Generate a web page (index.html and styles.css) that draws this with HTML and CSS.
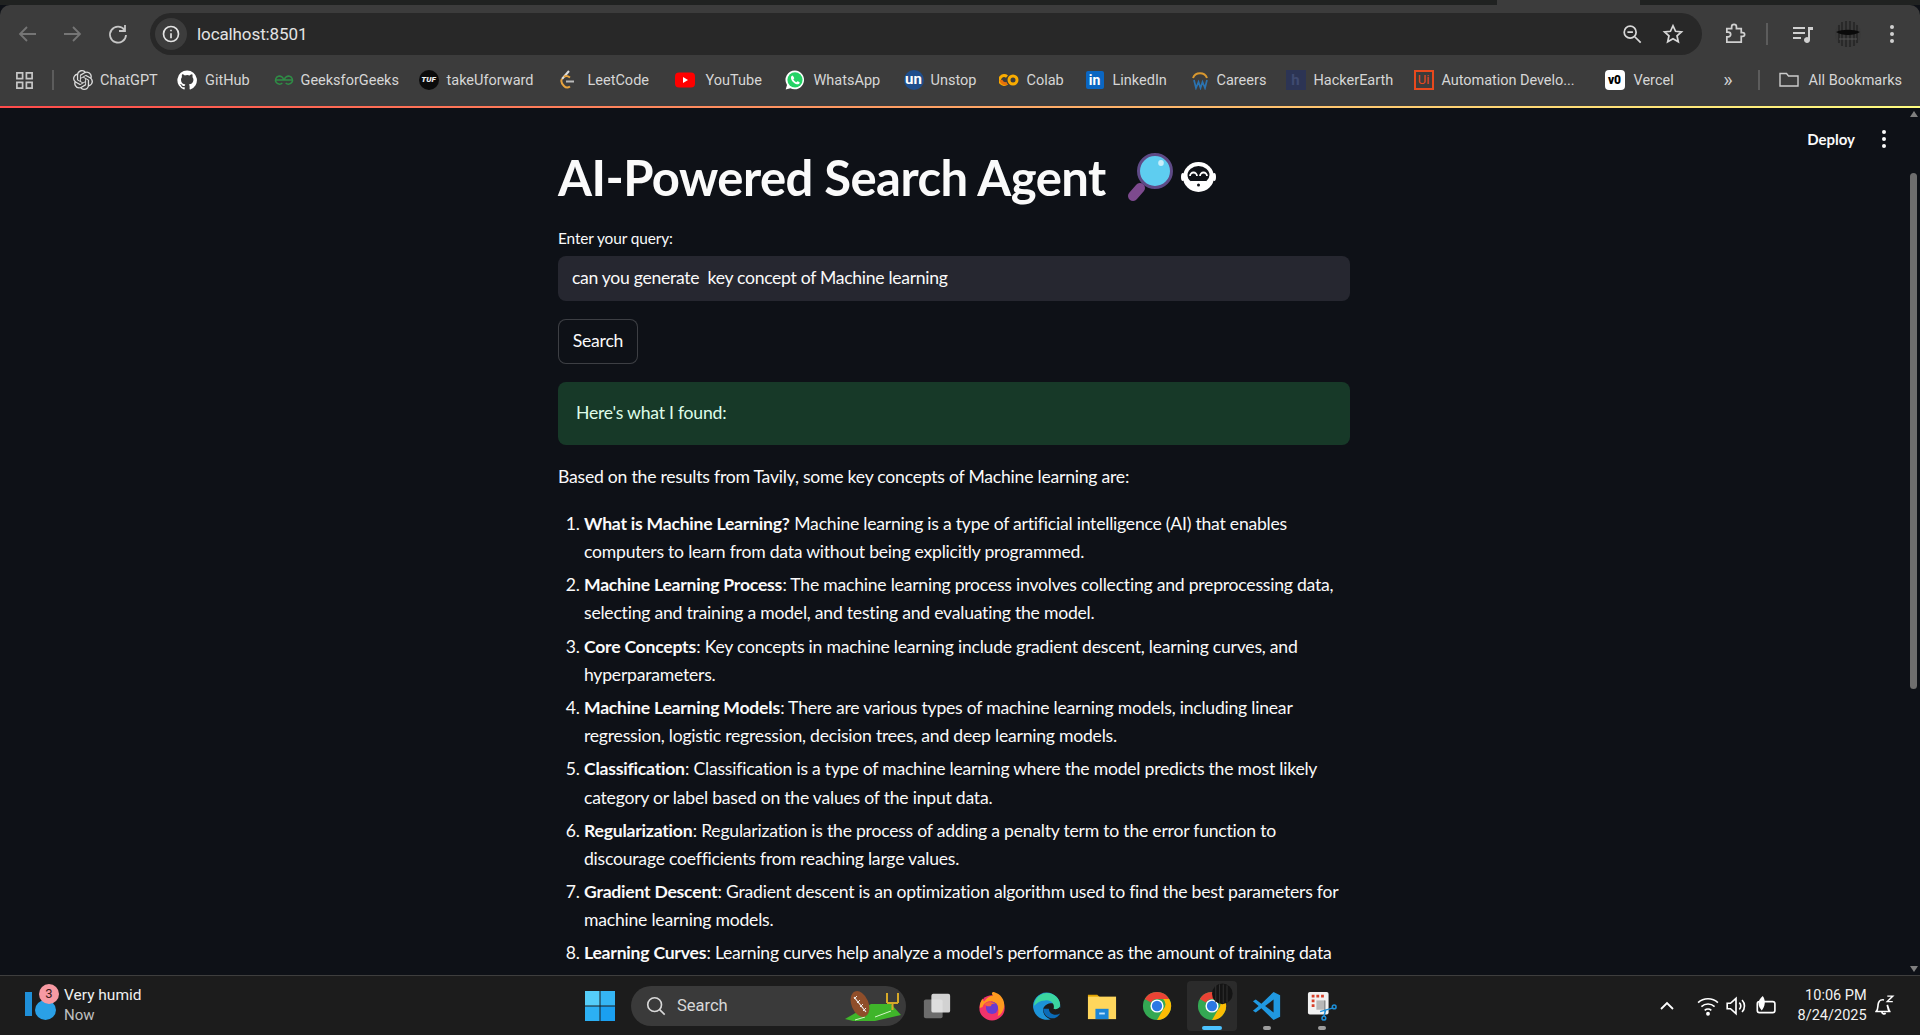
FILE: index.html
```html
<!DOCTYPE html>
<html lang="en">
<head>
<meta charset="utf-8">
<title>AI-Powered Search Agent</title>
<link rel="stylesheet" href="styles.css">
</head>
<body>
<div class="screen">
  <div class="tabstrip"><span class="tab-notch"></span></div>
  <header class="toolbar">
    <svg class="nav dim" viewBox="0 0 24 24"><path d="M20 12H5M11 5l-7 7 7 7"/></svg>
    <svg class="nav dim" viewBox="0 0 24 24"><path d="M4 12h15M13 5l7 7-7 7"/></svg>
    <svg class="nav reload" viewBox="0 0 24 24"><path d="M18.5 8A8 8 0 1 0 20 13M19 3v6h-6"/></svg>
    <div class="omnibox">
      <span class="info"><svg viewBox="0 0 24 24"><circle cx="12" cy="12" r="9"/><path d="M12 11v6M12 7v1.6"/></svg></span>
      <span class="url">localhost:8501</span>
      <span class="spacer"></span>
      <svg class="omni-icon" viewBox="0 0 24 24"><circle cx="10" cy="10" r="6.500"/><path d="M15 15l6.500 6.500M7 10h6"/></svg>
      <svg class="omni-icon" viewBox="0 0 24 24"><path d="M12 3l2.800 6 6.400.7-4.800 4.300 1.400 6.400L12 17.100l-5.800 3.300 1.400-6.400-4.800-4.300L9.200 9z"/></svg>
    </div>
    <svg class="tool ext" viewBox="0 0 24 24"><path d="M4 7h5V5a2.500 2.500 0 0 1 5 0v2h5v4h1.500a2 2 0 0 1 0 4H19v6H4v-5.500h1.500a2.500 2.500 0 0 0 0-5H4z" transform="scale(.96)"/></svg>
    <span class="vbar"></span>
    <svg class="tool media" viewBox="0 0 24 24"><path d="M2 6h12M2 11h12M2 16h8"/><path class="fill" d="M17 5h5v3h-3v10a3 3 0 1 1-2-2.800z"/></svg>
    <svg class="avatar" viewBox="0 0 26 26"><circle cx="13" cy="13" r="13" fill="#3a3a3a"/><path d="M7 1v24M11 0v26M15 0v26M19 1v24M4 4v18M22 4v18" stroke="#1f1f1f" stroke-width="1.200"/><path d="M1 11c6-3 18-3 24 0-6 4-18 4-24 0z" fill="#0a0a0a"/><path d="M4 18h18" stroke="#555" stroke-width="1"/></svg>
    <span class="kebab"><i></i><i></i><i></i></span>
  </header>
  <nav class="bookmarks">
    <svg class="apps" viewBox="0 0 20 20"><path d="M2 2h6v6H2zM12 2h6v6h-6zM2 12h6v6H2zM12 12h6v6h-6z"/></svg>
    <span class="vbar short"></span>
    <a class="bm w-chatgpt"><svg viewBox="0 0 24 24"><path fill="#dcdcdc" d="M22.282 9.821a5.985 5.985 0 0 0-.516-4.910 6.046 6.046 0 0 0-6.510-2.900A6.065 6.065 0 0 0 4.981 4.180a5.985 5.985 0 0 0-3.998 2.900 6.046 6.046 0 0 0 .743 7.097 5.980 5.980 0 0 0 .510 4.911 6.051 6.051 0 0 0 6.515 2.900A5.985 5.985 0 0 0 13.260 24a6.056 6.056 0 0 0 5.772-4.206 5.990 5.990 0 0 0 3.997-2.900 6.056 6.056 0 0 0-.747-7.073zM13.260 22.430a4.476 4.476 0 0 1-2.876-1.040l.141-.081 4.779-2.758a.795.795 0 0 0 .392-.681v-6.737l2.020 1.168a.071.071 0 0 1 .038.052v5.583a4.504 4.504 0 0 1-4.494 4.494zM3.600 18.304a4.470 4.470 0 0 1-.535-3.014l.142.085 4.783 2.759a.771.771 0 0 0 .780 0l5.843-3.369v2.332a.080.080 0 0 1-.033.062L9.740 19.950a4.500 4.500 0 0 1-6.140-1.646zM2.340 7.896a4.485 4.485 0 0 1 2.366-1.973V11.600a.766.766 0 0 0 .388.676l5.815 3.355-2.020 1.168a.076.076 0 0 1-.071 0l-4.830-2.786A4.504 4.504 0 0 1 2.340 7.872zm16.597 3.855l-5.833-3.387L15.119 7.200a.076.076 0 0 1 .071 0l4.830 2.791a4.494 4.494 0 0 1-.676 8.105v-5.678a.790.790 0 0 0-.407-.667zm2.010-3.023l-.141-.085-4.774-2.782a.776.776 0 0 0-.785 0L9.409 9.230V6.897a.066.066 0 0 1 .028-.061l4.830-2.787a4.500 4.500 0 0 1 6.680 4.660zm-12.640 4.135l-2.020-1.164a.080.080 0 0 1-.038-.057V6.075a4.500 4.500 0 0 1 7.375-3.453l-.142.080L8.704 5.460a.795.795 0 0 0-.393.681zm1.097-2.365l2.602-1.500 2.607 1.500v2.999l-2.597 1.500-2.607-1.500z"/></svg>ChatGPT</a>
    <a class="bm w-github"><svg viewBox="0 0 20 20"><path fill="#fff" d="M10 .5a9.700 9.700 0 0 0-3 18.900c.5.100.7-.2.700-.5v-1.700c-2.700.6-3.300-1.300-3.300-1.300-.4-1.100-1.100-1.400-1.100-1.400-.9-.6.100-.6.100-.6 1 .1 1.500 1 1.500 1 .9 1.500 2.300 1.100 2.900.8.100-.6.300-1.100.6-1.300-2.200-.2-4.400-1.100-4.400-4.800 0-1.100.4-1.900 1-2.600-.1-.2-.4-1.200.1-2.600 0 0 .8-.3 2.700 1a9.400 9.400 0 0 1 4.800 0c1.900-1.300 2.700-1 2.700-1 .5 1.400.2 2.400.1 2.600.6.700 1 1.500 1 2.600 0 3.700-2.300 4.600-4.500 4.800.4.300.7.900.7 1.800v2.700c0 .3.200.6.700.5A9.700 9.700 0 0 0 10 .5z"/></svg>GitHub</a>
    <a class="bm w-gfg"><svg viewBox="0 0 20 20"><g fill="none" stroke="#2f8d46" stroke-width="1.500"><path d="M1 10h18M9.500 10a4 4 0 1 0-1.200 3M10.500 10a4 4 0 1 1 1.200 3"/></g></svg>GeeksforGeeks</a>
    <a class="bm w-tuf"><span class="tuf">TUF</span>takeUforward</a>
    <a class="bm w-leet"><svg viewBox="0 0 20 20"><g fill="none" stroke-width="2"><path stroke="#ddd" d="M12 1L5 9"/><path stroke="#e7a33e" d="M5 9c-2 3 0 5 2 7s4 2 6 .5"/><path stroke="#e7a33e" d="M7 7c2-2 4-1 6 .5"/><path stroke="#bbb" d="M9 11.500h8"/></g></svg>LeetCode</a>
    <a class="bm w-yt"><svg viewBox="0 0 20 20"><rect y="2.500" width="20" height="15" rx="4" fill="#f00"/><path d="M8 7l5 3-5 3z" fill="#fff"/></svg>YouTube</a>
    <a class="bm w-wa"><svg viewBox="0 0 20 20"><path fill="#fff" d="M10 .5a9.400 9.400 0 0 0-8 14.400L.7 19.500l4.700-1.200A9.400 9.400 0 1 0 10 .5z"/><circle cx="10" cy="9.800" r="7.600" fill="#25d366"/><path fill="#fff" d="M7.300 5.500c-.9.400-1.500 1.500-1.300 2.800.4 2.700 3.200 5.500 5.900 5.900 1.300.2 2.400-.4 2.800-1.300.2-.5-2-1.800-2.500-1.500l-.9.900c-1-.3-2.700-2-3-3l.9-.9c.3-.5-1.400-3.100-1.900-2.900z"/></svg>WhatsApp</a>
    <a class="bm w-un"><span class="un">un</span>Unstop</a>
    <a class="bm w-colab"><svg viewBox="0 0 20 20"><g fill="none" stroke-width="3"><path stroke="#f9ab00" d="M8 6.700a4.400 4.400 0 1 0 0 6.600"/><circle stroke="#f9ab00" cx="14" cy="10" r="4"/><path stroke="#e8710a" d="M2 10a4.400 4.400 0 0 0 6 3.300"/></g></svg>Colab</a>
    <a class="bm w-li"><span class="li">in</span>LinkedIn</a>
    <a class="bm w-car"><svg viewBox="0 0 20 20"><path d="M3 8a7.500 7.500 0 0 1 14 0" fill="none" stroke="#d9982f" stroke-width="2"/><path d="M4 10l2 8 2.500-6 2 6 2-6 2.500 6 2-8" fill="none" stroke="#2b73b0" stroke-width="1.700"/></svg>Careers</a>
    <a class="bm w-he"><span class="he">h</span>HackerEarth</a>
    <a class="bm w-ui"><span class="ui">Ui</span><span class="clip">Automation Develo...</span></a>
    <a class="bm w-vercel"><span class="vz">v0</span>Vercel</a>
    <span class="spacer"></span>
    <span class="chev">»</span>
    <span class="vbar short"></span>
    <a class="bm all"><svg viewBox="0 0 20 20"><path d="M1 5.500V16h18V6H9.500L7.500 3.500H1z" fill="none" stroke="#ccc" stroke-width="1.400"/></svg>All Bookmarks</a>
  </nav>
  <div class="decoration"></div>
  <main class="app">
    <div class="app-head">
      <span>Deploy</span>
      <span class="kebab small"><i></i><i></i><i></i></span>
    </div>
    <div class="column">
      <h1>AI-Powered Search Agent
        <svg class="glass" viewBox="0 0 48 49"><path d="M14 35L7 43" stroke="#7d4a8e" stroke-width="10" stroke-linecap="round"/><circle cx="29" cy="18" r="16.500" fill="#5ecdf0" stroke="#5e4a86" stroke-width="3"/><ellipse cx="35" cy="10" rx="2.800" ry="3" fill="#c8eefa"/></svg>
        <svg class="face" viewBox="0 0 35 30"><ellipse cx="17.500" cy="15" rx="15.500" ry="15" fill="#fff"/><ellipse cx="1.800" cy="15" rx="1.800" ry="4" fill="#fff"/><ellipse cx="33.200" cy="15" rx="1.800" ry="4" fill="#fff"/><ellipse cx="17.500" cy="13" rx="11" ry="9" fill="#0e1117"/><path d="M9 14a3.500 3.500 0 0 1 7 0M19 14a3.500 3.500 0 0 1 7 0" fill="none" stroke="#fff" stroke-width="1.800"/><path d="M9 19h17c-2 3-5 4-8.500 4S11 22 9 19z" fill="#fff"/><circle cx="17.500" cy="23" r="1.500" fill="#0e1117"/></svg>
      </h1>
      <label class="field-label">Enter your query:</label>
      <div class="input">can you generate&nbsp; key concept of Machine learning</div>
      <button class="btn">Search</button>
      <div class="alert">Here's what I found:</div>
      <p class="lead">Based on the results from Tavily, some key concepts of Machine learning are:</p>
      <ol class="answers">
        <li><b>What is Machine Learning?</b> Machine learning is a type of artificial intelligence (AI) that enables computers to learn from data without being explicitly programmed.</li>
        <li><b>Machine Learning Process</b>: The machine learning process involves collecting and preprocessing data, selecting and training a model, and testing and evaluating the model.</li>
        <li><b>Core Concepts</b>: Key concepts in machine learning include gradient descent, learning curves, and hyperparameters.</li>
        <li><b>Machine Learning Models</b>: There are various types of machine learning models, including linear regression, logistic regression, decision trees, and deep learning models.</li>
        <li><b>Classification</b>: Classification is a type of machine learning where the model predicts the most likely category or label based on the values of the input data.</li>
        <li><b>Regularization</b>: Regularization is the process of adding a penalty term to the error function to discourage coefficients from reaching large values.</li>
        <li><b>Gradient Descent</b>: Gradient descent is an optimization algorithm used to find the best parameters for machine learning models.</li>
        <li><b>Learning Curves</b>: Learning curves help analyze a model's performance as the amount of training data changes.</li>
      </ol>
    </div>
    <div class="scroll"><span class="arrow up"></span><span class="thumb"></span><span class="spacer"></span><span class="arrow down"></span></div>
  </main>
  <footer class="taskbar">
    <div class="weather">
      <span class="wicon"><span class="wbar"></span><span class="drop"></span><span class="badge">3</span></span>
      <span class="wtext"><b>Very humid</b><small>Now</small></span>
    </div>
    <div class="dock">
      <svg class="win" viewBox="0 0 32 32"><path fill="#55cdf8" d="M1 1h14.500v14.500H1z"/><path fill="#35b5f4" d="M16.500 1H31v14.500H16.500z"/><path fill="#2cb0f3" d="M1 16.500h14.500V31H1z"/><path fill="#1a9ff0" d="M16.500 16.500H31V31H16.500z"/></svg>
      <div class="tsearch">
        <svg viewBox="0 0 24 24"><circle cx="10.500" cy="10.500" r="7.500"/><path d="M16 16l5.500 5.500"/></svg>
        <span>Search</span>
        <svg class="ball" viewBox="0 0 56 30"><path d="M0 28L26 13h20l10 11-26 6H8z" fill="#3fb52a"/><path d="M30 26l16-6M10 29l10-3" stroke="#d6f5c8" stroke-width="1"/><ellipse cx="15" cy="13" rx="8.500" ry="13.500" transform="rotate(-22 15 13)" fill="#8f4e2a"/><path d="M9 6l12 15" stroke="#eee" stroke-width="1.200"/><path d="M12 5l-3 3M15 9l-3 3M18 13l-3 3M21 17l-3 3" stroke="#eee" stroke-width="1"/><path d="M42 2v10M53 2v10M42 12h11M47.500 12v7" stroke="#d7a928" stroke-width="2" fill="none"/></svg>
      </div>
      <svg class="dock-icon" viewBox="0 0 32 32"><rect x="2" y="9" width="20" height="20" rx="2" fill="#6c6c6c"/><rect x="10" y="3" width="20" height="20" rx="2" fill="#f2f2f2" fill-opacity=".85"/></svg>
      <svg class="dock-icon" viewBox="0 0 32 32"><circle cx="16" cy="18" r="13.500" fill="#f2336b"/><path d="M3 18c0-5 2-9 3-10 0 2 1 3 2 3 2-4 6-6 9-6-2-3-1-4 1-4 7 2 12 8 11 16-1 4-3 8-7 10 2-5 1-14-6-16-5-1-9 2-10 6z" fill="#ff9a1f"/><circle cx="16" cy="18" r="6.500" fill="#6a3bd0"/><path d="M8 14c3-3 9-3 12 0-3-1-5 0-5 2-4 1-6-1-7-2z" fill="#f7653a"/></svg>
      <svg class="dock-icon" viewBox="0 0 32 32"><path d="M30 18A14.500 14.500 0 1 0 20 30c-5-1-9-6-8-11 1-4 5-6 9-6s8 2 9 5z" fill="#1d93d8"/><path d="M2 16C3 6 10 2 16 2c8 0 14 6 14 13 0 4-4 5-7 4 2-5-3-10-9-9-6 0-10 4-12 6z" fill="#3bd6a0"/><path d="M12 19c0 6 5 11 12 10 3-1 5-3 6-5-5 3-12 1-12-5z" fill="#0b6bb8"/></svg>
      <svg class="dock-icon" viewBox="0 0 32 32"><path d="M1 4h10l3 3H1z" fill="#e2a400"/><rect x="1" y="6" width="30" height="24" fill="#ffd65c"/><rect x="9" y="19" width="14" height="11" fill="#1a86d8"/><rect x="13" y="23" width="6" height="2" fill="#bfe3ff"/></svg>
      <svg class="dock-icon" viewBox="0 0 32 32"><use href="#chrome-mark"/></svg>
      <div class="running">
        <svg class="dock-icon over" viewBox="0 0 32 32"><defs><g id="chrome-mark"><circle cx="16" cy="16" r="15" fill="#34a853"/><path d="M16 1a15 15 0 0 1 13 7.500H16a7.500 7.500 0 0 0-6.500 3.700L3 8.500A15 15 0 0 1 16 1z" fill="#ea4335"/><path d="M29 8.500A15 15 0 0 1 16 31l6.500-11.200a7.500 7.500 0 0 0 0-11.300z" fill="#fbbc04"/><circle cx="16" cy="16" r="7" fill="#fff"/><circle cx="16" cy="16" r="5.500" fill="#2b78e4"/></g></defs><use href="#chrome-mark"/><circle cx="27" cy="3" r="11" fill="#141414"/><path d="M20 -6v18M24 -7v20M28 -7v20M32 -6v18" stroke="#333" stroke-width="1"/></svg>
        <span class="active-pill"></span>
      </div>
      <div class="pinned">
        <svg class="dock-icon" viewBox="0 0 32 32"><path d="M23 1l7 3.500v23L23 31 10 18.500 4 23l-3-2 6-5-6-5 3-2 6 4.500z" fill="#2098e0"/><path d="M23 9v14l-9-7z" fill="#1d1d1d"/></svg>
        <span class="dot"></span>
      </div>
      <div class="pinned">
        <svg class="dock-icon" viewBox="0 0 32 32"><rect x="1" y="1" width="22" height="24" rx="2" fill="#f2f2f2"/><path d="M5 4h3v3H5zM10 4h3v3h-3zM15 4h3v3h-3zM5 9h3v3H5zM5 14h3v3H5z" fill="#d8402a"/><path d="M10 10h9v10h-9z" fill="#b8b8b8"/><path d="M19 10v12" stroke="#888" stroke-width="1.500"/><path d="M14 22l14-4M20 20l-2 7" stroke="#1d8fd8" stroke-width="1.600" fill="none"/><circle cx="18" cy="29" r="2" fill="none" stroke="#1d8fd8" stroke-width="1.600"/><circle cx="29" cy="17" r="2" fill="none" stroke="#1d8fd8" stroke-width="1.600"/></svg>
        <span class="dot"></span>
      </div>
    </div>
    <div class="tray">
      <svg class="caret" viewBox="0 0 16 16"><path d="M2 11l6-6 6 6"/></svg>
      <svg class="tray-icon wifi" viewBox="0 0 20 20"><path d="M1 7a13 13 0 0 1 18 0M4 10.500a9 9 0 0 1 12 0M7 14a4.500 4.500 0 0 1 6 0"/><circle cx="10" cy="17" r="1" fill="#fff"/></svg>
      <svg class="tray-icon vol" viewBox="0 0 20 20"><path d="M2 7.500h3L10 3v14l-5-4.500H2zM13 7a4 4 0 0 1 0 6M15.500 4.500a8 8 0 0 1 0 11"/></svg>
      <svg class="tray-icon" viewBox="0 0 20 20"><rect x="3" y="6" width="16" height="10" rx="2"/><path class="fill" d="M8 1C3 5 3 10 7 14c3-3 4-9 1-13z"/></svg>
      <div class="clock"><span>10:06 PM</span><span>8/24/2025</span></div>
      <svg class="tray-icon bell" viewBox="0 0 20 20"><path d="M3 15c2-2 1-5 2-8 .7-2 3-3 5-2.500M13 9c.4 2 .5 4 2 6zM2 15h14M8 15a2 2 0 0 0 3.500 1.500"/><path d="M13 1h5l-5 5h5" stroke-width="1.300"/></svg>
    </div>
  </footer>
</div>
</body>
</html>
```
FILE: styles.css
```css
* { box-sizing: border-box; }
html, body { margin: 0; height: 100%; overflow: hidden; background: #0e1117; }
body { font-family: "Lato", "Liberation Sans", sans-serif; color: #fafafa; }
svg { display: block; flex: none; }
.spacer { flex: 1; }
.screen { height: 1035px; display: flex; flex-direction: column; }

.tabstrip { height: 5px; background: #202221; flex: none; display: flex; }
.tab-notch { display: block; margin-left: 1497px; width: 143px; background: #3c3c3c; }

.toolbar { height: 51px; background: #3c3c3c; border-radius: 10px 10px 0 0; display: flex; align-items: center; padding: 7px 0 0 16px; flex: none; }
.nav { width: 24px; height: 24px; margin-right: 20px; fill: none; stroke: #c7c7c7; stroke-width: 1.800; }
.nav.dim { stroke: #757575; }
.nav.reload { margin-right: 20px; margin-left: 2px; }
.omnibox { width: 1552px; height: 42px; border-radius: 21px; background: #282828; display: flex; align-items: center; padding: 0 18px 0 5px; margin-right: 21px; flex: none; }
.info { width: 32px; height: 32px; border-radius: 50%; background: #3c3c3c; display: flex; align-items: center; justify-content: center; margin-right: 10px; }
.info svg { width: 20px; height: 20px; fill: none; stroke: #e3e3e3; stroke-width: 2; }
.url { font: 17px "Roboto", sans-serif; color: #e3e3e3; letter-spacing: -.1px; }
.omni-icon { width: 22px; height: 22px; margin-left: 19px; fill: none; stroke: #d8d8d8; stroke-width: 1.900; }
.tool { width: 24px; height: 24px; fill: none; stroke: #d0d0d0; stroke-width: 1.800; }
.tool .fill { fill: #d0d0d0; stroke: none; }
.ext { margin-right: 19px; }
.vbar { width: 2px; height: 22px; background: #5c5c5c; flex: none; margin-right: 23px; }
.media { margin-right: 20px; }
.avatar { width: 26px; height: 26px; margin-right: 29px; flex: none; }
.kebab { display: flex; flex-direction: column; gap: 3px; flex: none; }
.kebab i { width: 4px; height: 4px; border-radius: 50%; background: #d0d0d0; }

.bookmarks { height: 50px; background: #3c3c3c; display: flex; align-items: center; padding: 0 18px 2px 15px; flex: none; font: 14.500px "Roboto", sans-serif; color: #d6d6d6; }
.apps { width: 19px; height: 19px; fill: none; stroke: #c7c7c7; stroke-width: 1.800; margin-right: 18px; }
.bookmarks .vbar.short { margin-right: 19px; height: 20px; }
.bm { display: flex; align-items: center; gap: 7px; white-space: nowrap; flex: none; }
.bm svg { width: 20px; height: 20px; }
.w-chatgpt { width: 104px; }
.w-github { width: 96.500px; gap: 8px; }
.w-gfg { width: 145px; }
.w-tuf { width: 138px; gap: 8px; }
.w-leet { width: 118px; gap: 11px; }
.w-yt { width: 110px; gap: 11px; }
.w-wa { width: 119px; gap: 9px; }
.w-un { width: 95px; }
.w-colab { width: 87px; gap: 8px; }
.w-li { width: 104px; gap: 9px; }
.w-car { width: 96px; }
.w-he { width: 128px; gap: 8px; }
.w-ui { width: 191px; gap: 8px; }
.w-vercel { gap: 9px; }
.clip { letter-spacing: -.05px; }
.tuf { width: 20px; height: 20px; border-radius: 50%; background: #0b0b0b; color: #eee; font: italic 900 8px/20px "Roboto", sans-serif; text-align: center; flex: none; }
.un { width: 20px; height: 20px; border-radius: 50%; background: #1f4e8c; color: #fff; font: 700 15px/18px "Roboto", sans-serif; text-align: center; flex: none; }
.li { width: 18px; height: 18px; border-radius: 2px; background: #0a66c2; color: #fff; font: 700 14px/18px "Roboto", sans-serif; text-align: center; flex: none; }
.he { width: 20px; height: 20px; background: #2c3454; color: #3f4a70; font: 700 15px/20px "Roboto", sans-serif; text-align: center; flex: none; }
.ui { width: 20px; height: 20px; border: 2px solid #e8491d; color: #e8491d; font: 13px/16px "Roboto", sans-serif; text-align: center; flex: none; }
.vz { width: 20px; height: 20px; border-radius: 4px; background: #fff; color: #000; font: 900 12px/20px "Roboto", sans-serif; text-align: center; flex: none; }
.chev { font-size: 20px; line-height: 1; margin-right: 25px; color: #cfcfcf; }
.all { gap: 10px; }

.decoration { height: 2px; flex: none; background: linear-gradient(90deg, #ff4b4b, #fffd80); }

.app { flex: 1; min-height: 0; position: relative; background: #0e1117; overflow: hidden; display: flex; justify-content: center; }
.app-head { position: absolute; top: 22px; right: 34px; display: flex; align-items: center; gap: 27px; font-size: 15px; font-weight: 700; }
.kebab.small { gap: 3px; }
.kebab.small i { background: #fafafa; }
.column { width: 792px; flex: none; margin-right: 12px; padding-top: 40px; letter-spacing: -.23px; }
h1 { margin: 0 0 21px; display: flex; align-items: center; font-size: 49px; line-height: 1.2; font-weight: 700; white-space: nowrap; color: #fafafa; letter-spacing: -.55px; }
.glass { width: 48px; height: 49px; margin-left: 20px; }
.face { width: 35px; height: 30px; margin-left: 7px; }
.field-label { display: block; font-size: 15.400px; line-height: 20px; margin-bottom: 8px; letter-spacing: -.1px; }
.input { height: 45px; background: #262730; border-radius: 8px; padding: 0 14px 2px; display: flex; align-items: center; font-size: 17.600px; letter-spacing: -.3px; }
.btn { display: block; margin-top: 18px; height: 45px; width: 80px; padding: 0 0 2px; border: 1px solid rgba(250,250,250,.2); border-radius: 8px; background: #0e1117; color: #fafafa; font: inherit; font-size: 17.600px; letter-spacing: inherit; }
.alert { margin-top: 18px; height: 63px; padding: 0 18px 2px; border-radius: 8px; background: #173928; color: #dffde9; display: flex; align-items: center; font-size: 17.600px; }
.lead { margin: 18px 0 0; font-size: 17.600px; line-height: 28.160px; }
.answers { margin: 19px 0 0; padding: 0 0 0 26px; font-size: 17.600px; line-height: 28.160px; }
.answers li { margin-bottom: 5.050px; }
.answers b { font-weight: 700; margin-right: .3px; }

.scroll { position: absolute; top: 0; right: 0; bottom: 0; width: 13px; display: flex; flex-direction: column; align-items: center; padding: 3px 0 3px; }
.arrow { width: 0; height: 0; border-left: 4px solid transparent; border-right: 4px solid transparent; }
.arrow.up { border-bottom: 6px solid #7f7f7f; }
.arrow.down { border-top: 6px solid #7f7f7f; }
.thumb { width: 7px; height: 516px; background: #6e6e6e; border-radius: 4px; margin-top: 56px; }

.taskbar { height: 60px; flex: none; background: #1c1c1c; border-top: 1px solid #3e3e3e; display: flex; align-items: center; position: relative; }
.weather { width: 570px; display: flex; align-items: center; padding-left: 14px; flex: none; }
.wicon { width: 50px; height: 44px; position: relative; flex: none; }
.wbar { position: absolute; left: 11px; top: 8px; width: 7px; height: 24px; background: #1f8fd8; }
.drop { position: absolute; left: 21px; top: 16px; width: 21px; height: 20px; background: #2aa0e6; border-radius: 50%; }
.badge { position: absolute; left: 25px; top: 0; width: 20px; height: 20px; border-radius: 50%; background: #f79aa3; color: #3a1a1a; font: 13px/20px "Roboto", sans-serif; text-align: center; }
.wtext { display: flex; flex-direction: column; padding-bottom: 2px; font-family: "Roboto", sans-serif; font-size: 15.500px; line-height: 20px; }
.wtext b { font-weight: 400; color: #f0f0f0; }
.wtext small { font-size: 15px; color: #c0c0c0; }
.dock { display: flex; align-items: center; height: 100%; flex: none; }
.win { width: 32px; height: 32px; margin-right: 15px; margin-left: 14px; }
.tsearch { width: 275px; height: 40px; border-radius: 20px; background: #3a3a3a; display: flex; align-items: center; padding: 0 0 0 14px; gap: 10px; color: #d8d8d8; font: 16.500px "Roboto", sans-serif; margin-right: 3px; }
.tsearch svg { width: 22px; height: 22px; fill: none; stroke: #d8d8d8; stroke-width: 1.800; }
.tsearch .ball { width: 56px; height: 30px; margin-left: auto; margin-right: 5px; stroke: none; }
.dock-icon { width: 30px; height: 30px; margin: 0 12.500px; overflow: visible; }
.running { width: 50px; height: 50px; margin: 0 2.500px; background: #2b2b2b; border-radius: 4px; display: flex; flex-direction: column; align-items: center; padding-top: 10px; position: relative; }
.running .dock-icon { margin: 0; }
.active-pill { position: absolute; bottom: 1px; width: 20px; height: 4px; border-radius: 2px; background: #4cc2ff; }
.pinned { width: 55px; display: flex; flex-direction: column; align-items: center; position: relative; }
.pinned .dock-icon { margin: 0; }
.dot { position: absolute; bottom: -9px; width: 8px; height: 4px; border-radius: 2px; background: #9d9d9d; }
.tray { margin-left: auto; display: flex; align-items: center; padding-right: 25.400px; font: 14.500px "Roboto", sans-serif; color: #f2f2f2; }
.caret { width: 16px; height: 16px; fill: none; stroke: #fff; stroke-width: 1.800; margin-right: 22px; }
.tray-icon { width: 22px; height: 22px; fill: none; stroke: #fff; stroke-width: 1.500; }
.tray-icon .fill { fill: #fff; stroke: none; }
.wifi { margin-right: 6px; }
.vol { margin-right: 7.500px; }
.clock { display: flex; flex-direction: column; align-items: flex-end; line-height: 20px; margin: 0 6px 0 21.500px; }
```
